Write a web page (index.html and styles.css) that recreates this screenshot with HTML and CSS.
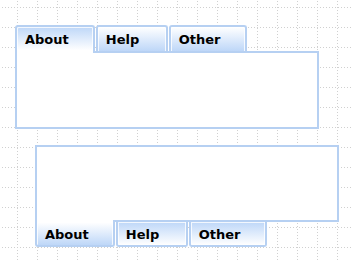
FILE: index.html
```html
<!DOCTYPE html>
<html lang="en">
<head>
  <meta charset="UTF-8">
  <meta name="viewport" content="width=device-width, initial-scale=1.0">
  <title>Tab View</title>
  <link rel="stylesheet" href="styles.css">
</head>
<body>
  <!-- tabs on top -->
  <div class="tabview tabview-top">
    <div class="tab-strip">
      <div class="tab is-active">About</div>
      <div class="tab">Help</div>
      <div class="tab">Other</div>
    </div>
    <div class="tab-panel"></div>
  </div>

  <!-- tabs on bottom -->
  <div class="tabview tabview-bottom">
    <div class="tab-panel"></div>
    <div class="tab-strip">
      <div class="tab is-active">About</div>
      <div class="tab">Help</div>
      <div class="tab">Other</div>
    </div>
  </div>
</body>
</html>
```

FILE: styles.css
```css
:root {
  --border: #b6d0f2;
  --tab-blue: #bed7f8;
  --grid-dot: #d0d0d0;
}

* {
  box-sizing: border-box;
}

body {
  margin: 0;
  padding: 25px 0 0 15px;
  min-height: 262px;
  font-family: 'DejaVu Sans', 'Liberation Sans', sans-serif;
  font-size: 13px;
  font-weight: bold;
  color: #000;
  background-color: #fff;
  /* dotted 20px grid */
  background-image:
    conic-gradient(from 270deg at 1px 1px, var(--grid-dot) 25%, transparent 0),
    conic-gradient(from 270deg at 1px 1px, var(--grid-dot) 25%, transparent 0);
  background-size: 3px 20px, 20px 3px;
  background-position: 17px 7px, 17px 7px;
}

.tabview {
  width: 304px;
}

.tabview-bottom {
  margin: 16px 0 0 20px;
}

.tab-strip {
  display: flex;
  gap: 1px;
  position: relative;
  z-index: 1;
}

.tab {
  display: flex;
  align-items: center;
  min-width: 72px;
  padding: 0 24px 0 8px;
  border: 2px solid var(--border);
  box-shadow: inset 1px 1px 0 rgba(255, 255, 255, 0.8), inset -1px 0 0 rgba(255, 255, 255, 0.8);
  white-space: nowrap;
}

.tab-panel {
  height: 78px;
  border: 2px solid var(--border);
  background: #fff;
}

/* top placement */
.tabview-top .tab-strip {
  align-items: flex-start;
  margin-bottom: -2px;
}

.tabview-top .tab {
  height: 26px;
  border-bottom: 0;
  border-radius: 3px 3px 0 0;
  background: linear-gradient(#fff, var(--tab-blue));
}

.tabview-top .tab.is-active {
  height: 28px;
  padding-bottom: 2px;
  background: linear-gradient(var(--tab-blue), #fff 90%);
}

/* bottom placement */
.tabview-bottom .tab-panel {
  height: 77px;
}

.tabview-bottom .tab-strip {
  align-items: flex-end;
  margin-top: -2px;
}

.tabview-bottom .tab {
  height: 25px;
  padding-top: 1px;
  border-top: 0;
  border-radius: 0 0 3px 3px;
  background: linear-gradient(var(--tab-blue), #fff);
}

.tabview-bottom .tab.is-active {
  height: 27px;
  padding-top: 3px;
  background: linear-gradient(#fff 10%, var(--tab-blue));
}
```
